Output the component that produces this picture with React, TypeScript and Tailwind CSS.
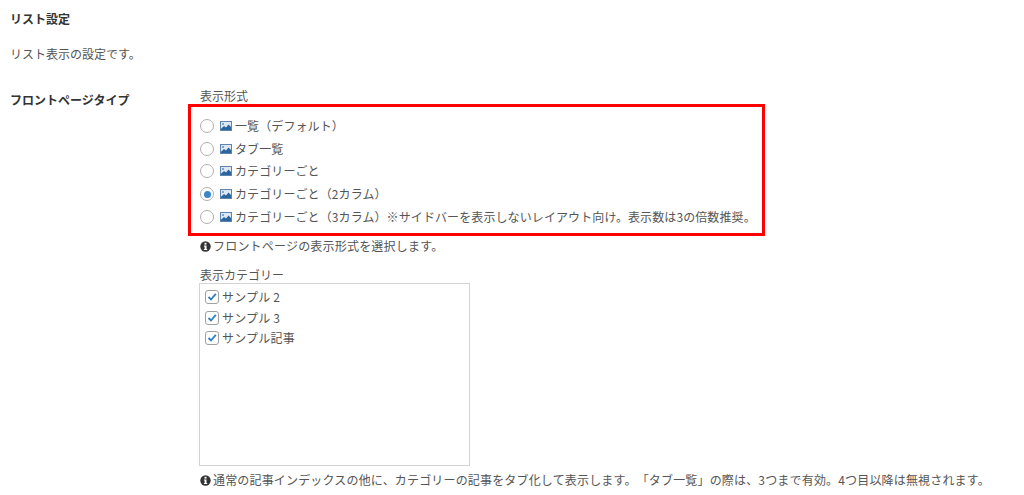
import React from "react";

const font = { fontFamily: '"Noto Sans CJK JP", "Liberation Sans", sans-serif' };

function Pic() {
  return (
    <svg width="12" height="10" viewBox="0 0 12 10" className="shrink-0 mr-[3px]">
      <rect x="0.5" y="0.5" width="11" height="9" fill="#dfe8f2" stroke="#5c84b0" />
      <path d="M1 9 L1 7.8 L4 5 L6 6.6 L8.5 3.6 L11 6 L11 9 Z" fill="#2a659e" />
      <circle cx="3" cy="3" r="1" fill="#5c8fc0" />
    </svg>
  );
}

function Info() {
  return (
    <svg width="11" height="11" viewBox="0 0 11 11" className="shrink-0 mr-[2px]">
      <circle cx="5.5" cy="5.5" r="5.2" fill="#333" />
      <rect x="4.5" y="1.8" width="2" height="1.8" fill="#fff" />
      <path d="M3.9 4.5 H6.5 V8 H7.2 V9.1 H3.9 V8 H4.6 V5.6 H3.9 Z" fill="#fff" />
    </svg>
  );
}

function Radio({ checked, label }: { checked?: boolean; label: string }) {
  return (
    <div className="flex items-center h-[22.75px]">
      <span className="w-[14px] h-[14px] rounded-full border border-[#b0b0b0] bg-white flex items-center justify-center mr-[6px] shrink-0">
        {checked && <span className="w-[7px] h-[7px] rounded-full bg-[#3b86c6]" />}
      </span>
      <Pic />
      <span className="whitespace-nowrap tracking-[0.1px]">{label}</span>
    </div>
  );
}

function Check({ label }: { label: string }) {
  return (
    <div className="flex items-center h-[20.5px]">
      <span className="w-[14px] h-[14px] rounded-[3px] border border-[#a0a0a0] bg-white flex items-center justify-center mr-[3px] shrink-0">
        <svg width="10" height="10" viewBox="0 0 10 10">
          <path d="M1.5 5 L4 7.5 L8.8 1.8" fill="none" stroke="#2f7fc1" strokeWidth="1.8" />
        </svg>
      </span>
      <span className="whitespace-nowrap tracking-[0.2px]">{label}</span>
    </div>
  );
}

export default function App() {
  return (
    <div style={font} className="w-[1024px] h-[495px] overflow-hidden bg-white text-[#555] text-[12px] leading-[18px] pl-[10px] [text-spacing-trim:space-all]">
      <h2 className="font-bold text-[#333] pt-[10px] h-[36px]">リスト設定</h2>
      <p className="mt-[9px] h-[18px]">リスト表示の設定です。</p>
      <div className="flex mt-[28px]">
        <div className="w-[190px] shrink-0 font-bold text-[#333]">フロントページタイプ</div>
        <div className="flex-1 -mt-[4px]">
          <div className="h-[17px]">表示形式</div>
          <div className="-ml-[12px] w-[577px] h-[132px] border-[3px] border-[#ff0000] pl-[9px] pt-[7.5px]">
            <Radio label="一覧（デフォルト）" />
            <Radio label="タブ一覧" />
            <Radio label="カテゴリーごと" />
            <Radio checked label="カテゴリーごと（2カラム）" />
            <Radio label="カテゴリーごと（3カラム）※サイドバーを表示しないレイアウト向け。表示数は3の倍数推奨。" />
          </div>
          <div className="flex items-center h-[18px] mt-[1px]">
            <Info />
            <span className="tracking-[0.2px]">フロントページの表示形式を選択します。</span>
          </div>
          <div className="h-[17px] mt-[11px]">表示カテゴリー</div>
          <div className="-ml-[1px] w-[271px] h-[183px] border border-[#d4d4d4] pl-[5px] pt-[3px]">
            <Check label="サンプル 2" />
            <Check label="サンプル 3" />
            <Check label="サンプル記事" />
          </div>
          <div className="flex items-center h-[18px] mt-[5px] whitespace-nowrap">
            <Info />
            <span className="tracking-[0.17px]">通常の記事インデックスの他に、カテゴリーの記事をタブ化して表示します。「タブ一覧」の際は、3つまで有効。4つ目以降は無視されます。</span>
          </div>
        </div>
      </div>
    </div>
  );
}
